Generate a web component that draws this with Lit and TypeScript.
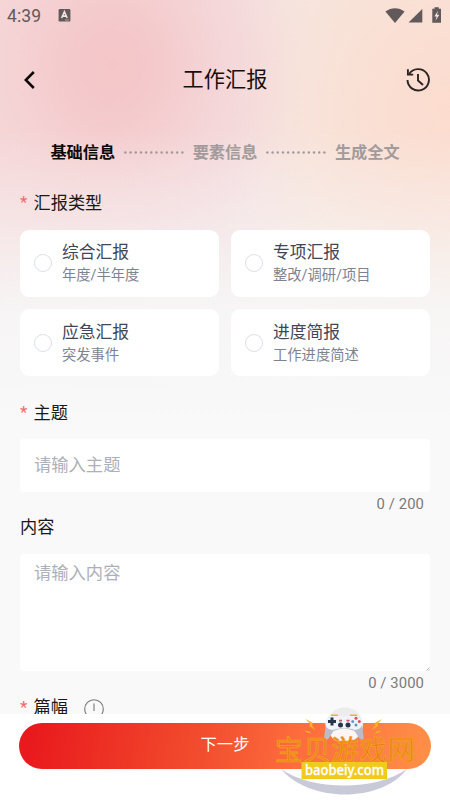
import { LitElement, html, css, svg } from "lit";
import { customElement, property } from "lit/decorators.js";

const FONT = css`Roboto, "Noto Sans CJK SC", sans-serif`;

@customElement("status-bar")
class StatusBar extends LitElement {
  static styles = css`
    :host { display: flex; height: 32px; align-items: center; padding: 0 7px 0 7px; box-sizing: border-box; color: #62595a; }
    .time { font: 17.5px/32px Roboto, sans-serif; width: 51px; letter-spacing: 0.1px; }
    .grow { flex: 1; }
    svg { display: block; }
  `;
  render() {
    return html`
      <span class="time">4:39</span>
      <svg width="14" height="14" viewBox="0 0 14 14"><rect x="0.6" y="0" width="11.8" height="12.6" rx="1.2" fill="#62595a"/><path d="M3.6 9 6.4 2.800 9.2 9M4.6 7.100h3.7" fill="none" stroke="#f5e0e0" stroke-width="1.6"/><path d="M7 11h4" stroke="#c8b4b5" stroke-width="0.8"/></svg>
      <span class="grow"></span>
      <svg width="58" height="18" viewBox="0 0 58 18" fill="#62595a">
        <path d="M0.4 4.6C6.1 0 13.9 0 19.6 4.6L10 16Z"/>
        <path d="M23.500 15.600 37.3 2V15.600Z"/>
        <path d="M49.500 0.3h4.3v1.5h2.2V15.800H47.3V1.8H49.500Z"/>
        <path d="M53.1 3.8 49.3 9.5h2.3L50.500 13.8l3.8-6h-2.3Z" fill="#f6e5df"/>
      </svg>`;
  }
}

@customElement("step-bar")
class StepBar extends LitElement {
  static styles = css`
    :host { display: flex; height: 24px; align-items: center; justify-content: center; font-family: ${FONT}; font-size: 16.2px; font-weight: 700; }
    .on { color: #0c0a0a; }
    .off { color: #a29b9b; }
    .dots { width: 60px; margin: 3px 8.5px 0 9px; }
    svg { display: block; }
  `;
  render() {
    const dots = html`<svg class="dots" width="60" height="3" viewBox="0 0 60 3">${Array.from({ length: 12 }, (_, i) => svg`<circle cx=${1.4 + i * 5.18} cy="1.5" r="1.2" fill="#a19999"/>`)}</svg>`;
    return html`<span class="on">基础信息</span>${dots}<span class="off">要素信息</span>${dots}<span class="off">生成全文</span>`;
  }
}

@customElement("option-card")
class OptionCard extends LitElement {
  @property() heading = "";
  @property() note = "";
  static styles = css`
    :host { display: flex; align-items: center; background: #fff; border-radius: 9px; padding-left: 14px; box-sizing: border-box; font-family: ${FONT}; }
    .radio { width: 18px; height: 18px; border: 1.3px solid #dddfe8; border-radius: 50%; box-sizing: border-box; margin-right: 10px; }
    .copy { padding-top: 1px; }
    .heading { font-size: 16.8px; line-height: 23px; color: #3f4656; }
    .note { font-size: 14.3px; line-height: 22px; color: #7d8390; }
  `;
  render() {
    return html`<span class="radio"></span><div class="copy"><div class="heading">${this.heading}</div><div class="note">${this.note}</div></div>`;
  }
}

@customElement("site-mark")
class SiteMark extends LitElement {
  static styles = css`
    :host { display: block; }
    svg { display: block; overflow: visible; }
    .cn { font: 27.5px "Noto Sans CJK SC", sans-serif; fill: #f07a22; stroke: #f0a21c; stroke-width: 0.8px; }
    .en { font: 500 14.6px "Noto Sans", sans-serif; fill: #fff; stroke: #fff; stroke-width: 0.3px; }
  `;
  render() {
    return html`<svg width="150" height="96" viewBox="270 704 150 96">
      <path d="M281 769C310 803 381 803 407 769C376 791 312 791 281 769Z" fill="#c9cad8"/>
      <ellipse cx="345" cy="725" rx="18" ry="17.500" fill="#ececec"/>
      <ellipse cx="344" cy="734" rx="13" ry="8.500" fill="#fbf6f3"/>
      <g fill="none" stroke="#e7b43a" stroke-width="1.6"><path d="M331 715.2h7M350 715.2h7"/></g>
      <path d="M330 717C327 718 326 721 325.700 725L324.200 737C324.200 740 327.500 740.500 329 738L333.500 731Q344 726 354.500 731L359 737.500C361 740.500 364 740 363.600 737L361.800 724C361.500 720 360 718 357 717Z" fill="#b9bccd"/>
      <path d="M332 716.500C338 715.500 350 715.500 356 716.500C365 718 364 729.500 355 730C350 727.500 338 727.500 333 730C323 729.500 323 718 332 716.500Z" fill="#f2f3f8"/>
      <path d="M332 717.500v8M328 721.500h8" stroke="#27364c" stroke-width="3"/>
      <circle cx="340.500" cy="725" r="2.500" fill="#27364c"/><circle cx="348" cy="725" r="2.500" fill="#27364c"/>
      <path d="M339 720.700h3M346.500 720.700h3" stroke="#d64a70" stroke-width="1.700"/>
      <circle cx="356" cy="718.300" r="1.500" fill="#e34b59"/><circle cx="352.700" cy="721.600" r="1.500" fill="#5b9fd0"/><circle cx="359.300" cy="721.600" r="1.500" fill="#e34b59"/><circle cx="356" cy="725" r="1.500" fill="#4f9eb5"/>
      <path d="M305.500 719l7.500 4-1 2 3 5-5.500-4 .5-2ZM305 730.500l4.500 1 1.500 2-5-1.500ZM382 719l-7.500 4 1 2-4 5 6.500-4-.5-2ZM381 730.500l-4.500 1-1.500 2 5-1.500Z" fill="#f4b526"/>
      <text class="cn" x="275" y="759.500" textLength="140">宝贝游戏网</text>
      <rect x="301.500" y="762" width="85.500" height="17" fill="#efcb20"/>
      <text class="en" x="305" y="774.500" textLength="79" lengthAdjust="spacingAndGlyphs">baobeiy.com</text>
    </svg>`;
  }
}

@customElement("app-root")
class AppRoot extends LitElement {
  static styles = css`
    :host { display: block; width: 450px; height: 800px; overflow: hidden; position: relative; font-family: ${FONT}; }
    .page {
      height: 800px; display: flex; flex-direction: column; box-sizing: border-box;
      background:
        linear-gradient(to bottom, rgba(249,249,249,0) 130px, rgba(247,246,246,0.4) 220px, rgba(247,247,247,0.92) 310px, #f9f9f9 430px),
        radial-gradient(ellipse 185px 210px at 112px 65px, #f4c6c8 0%, rgba(244,199,201,0.9) 22%, rgba(245,206,208,0.5) 60%, rgba(245,215,217,0) 100%),
        radial-gradient(ellipse 210px 240px at 450px 110px, #fcdccf 0%, rgba(251,221,208,0.75) 35%, rgba(247,228,218,0) 100%),
        linear-gradient(to right, #f5dadb 0%, #f4dfe1 50%, #f6e6df 70%, #f7e4db 100%);
    }
    .nav { height: 96px; display: grid; grid-template-columns: 40px 1fr 40px; align-items: center; padding: 0 15px; }
    .nav svg { display: block; }
    .nav .back { margin-left: 2px; }
    .nav .clock { justify-self: end; margin-right: 4.500px; }
    .title { text-align: center; font-size: 21.200px; line-height: 30px; color: #151010; }
    step-bar { margin-top: 11px; }
    .form { padding: 0 20px; flex: 1; min-height: 0; overflow: hidden; }
    .label { display: flex; align-items: center; height: 26px; font-size: 17.200px; color: #1b1818; }
    .star { color: #f2696b; width: 13.500px; font-size: 17px; height: 26px; line-height: 29px; }
    .first { margin-top: 25px; }
    .cards { display: grid; grid-template-columns: 1fr 1fr; grid-template-rows: 67.500px 67px; gap: 12px; margin-top: 15.500px; }
    .topic { margin-top: 22px; }
    .box { background: #fff; border-radius: 4px; color: #adb0b8; font-size: 17.300px; padding-left: 14px; position: relative; }
    .line { height: 53px; line-height: 52px; margin-top: 14.500px; }
    .area { height: 117px; line-height: 38px; margin-top: 15px; }
    .grip { position: absolute; right: 0; bottom: 0; display: block; }
    .count { text-align: right; padding-right: 6px; font-size: 14.800px; line-height: 24px; height: 21px; color: #7a7a7a; letter-spacing: 0.1px; }
    .length { margin-top: 1px; }
    .info { margin-left: 16px; margin-top: 7px; display: block; }
    .foot { background: #fff; height: 86.500px; padding: 9.500px 19px 0; box-sizing: border-box; flex: none; }
    .next { height: 46px; border-radius: 23px; background: linear-gradient(100deg, #e9191d 3%, #f24e2e 45%, #fd6c3d 67%, #ff9048 100%); color: #fff; font-size: 16.300px; line-height: 44px; text-align: center; }
    site-mark { position: absolute; left: 270px; top: 704px; }
  `;
  render() {
    return html`
      <div class="page">
        <status-bar></status-bar>
        <div class="nav">
          <svg class="back" width="24" height="24" viewBox="0 0 24 24" fill="none" stroke="#0b0808" stroke-width="2.500"><path d="M16.800 4 8.800 12l8 8"/></svg>
          <div class="title">工作汇报</div>
          <svg class="clock" width="26" height="26" viewBox="0 0 26 26" fill="none" stroke="#2b2523" stroke-width="1.900"><path d="M4.200 7A10.700 10.700 0 1 1 2.500 13"/><path d="M2.900 2.200V7.600H8.200"/><path d="M13 7v6.500l5 4.500"/></svg>
        </div>
        <step-bar></step-bar>
        <div class="form">
          <div class="label first"><span class="star">*</span>汇报类型</div>
          <div class="cards">
            <option-card heading="综合汇报" note="年度/半年度"></option-card>
            <option-card heading="专项汇报" note="整改/调研/项目"></option-card>
            <option-card heading="应急汇报" note="突发事件"></option-card>
            <option-card heading="进度简报" note="工作进度简述"></option-card>
          </div>
          <div class="label topic"><span class="star">*</span>主题</div>
          <div class="box line">请输入主题</div>
          <div class="count">0 / 200</div>
          <div class="label">内容</div>
          <div class="box area">请输入内容<svg class="grip" width="4" height="4" viewBox="0 0 4 4"><path d="M0.500 3.500l3-3M2.500 3.800 3.800 2.500" stroke="#999" stroke-width="0.700"/></svg></div>
          <div class="count">0 / 3000</div>
          <div class="label length"><span class="star">*</span>篇幅
            <svg class="info" width="20" height="20" viewBox="0 0 20 20" fill="none" stroke="#77797b" stroke-width="1.100"><circle cx="10" cy="10" r="9.300"/><path d="M10 4.500v7.500M10 15v1.200"/></svg>
          </div>
        </div>
        <div class="foot"><div class="next">下一步</div></div>
      </div>
      <site-mark></site-mark>`;
  }
}
